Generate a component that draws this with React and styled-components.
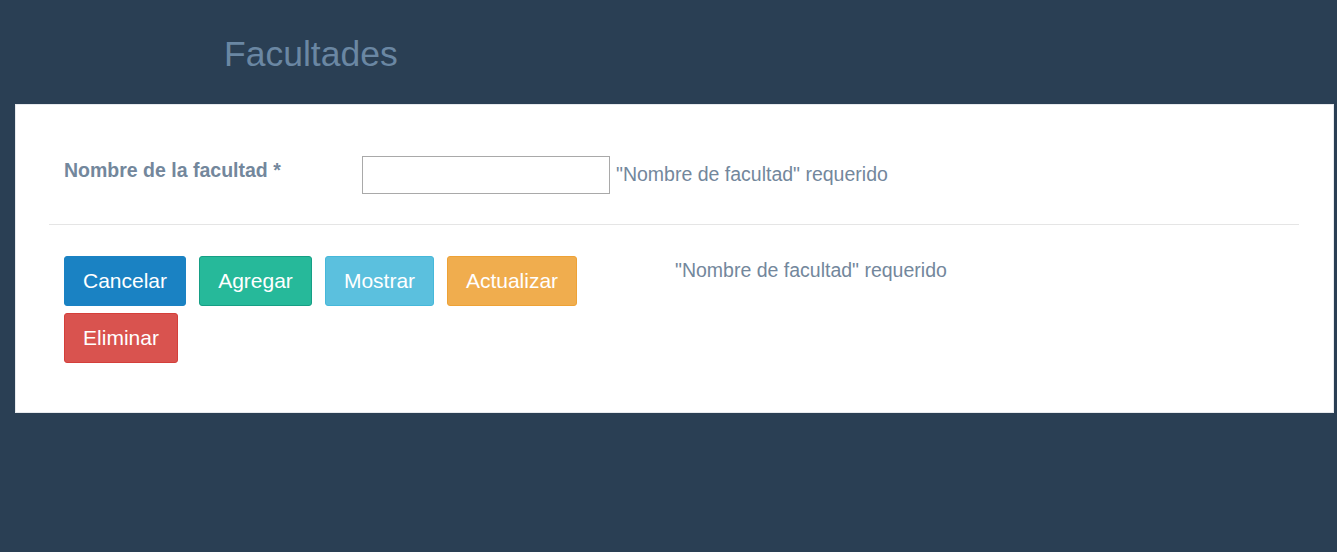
import React from "react";
import styled, { createGlobalStyle } from "styled-components";

const Global = createGlobalStyle`
  html, body { margin: 0; padding: 0; }
  body {
    background: #2A3F54;
    font-family: "Liberation Sans", Arial, sans-serif;
    color: #73879C;
  }
`;

const Page = styled.div`
  width: 1337px;
  height: 552px;
  background: #2A3F54;
  overflow: hidden;
`;

const Header = styled.header`
  height: 104px;
  box-sizing: border-box;
  padding: 33px 0 0 224px;
`;

const Title = styled.h3`
  margin: 0;
  font-weight: 400;
  font-size: 35.5px;
  line-height: 42px;
  color: #6A87A3;
`;

const Panel = styled.section`
  margin-left: 15px;
  width: 1319px;
  height: 309px;
  box-sizing: border-box;
  background: #fff;
  border: 1px solid #E6E9ED;
  padding: 51px 34px 0 33px;
`;

const FormRow = styled.div`
  display: flex;
  align-items: flex-start;
  padding-left: 15px;
`;

const Label = styled.label`
  width: 298px;
  flex: none;
  font-weight: 700;
  font-size: 19.5px;
  line-height: 28px;
  color: #73879C;
`;

const Input = styled.input`
  width: 248px;
  height: 38px;
  box-sizing: border-box;
  margin: 0;
  border: 1px solid #A9A9A9;
  padding: 0 8px;
  font: inherit;
  outline: none;
`;

const Help = styled.span`
  margin-left: 6px;
  font-size: 19.5px;
  line-height: 36px;
  color: #73879C;
`;

const Divider = styled.hr`
  border: 0;
  border-top: 1px solid #E5E5E5;
  margin: 30px 0 31px;
`;

const ActionsRow = styled.div`
  display: flex;
  align-items: flex-start;
  padding-left: 15px;
`;

const Buttons = styled.div`
  width: 596px;
  display: flex;
  flex-wrap: wrap;
  gap: 7px 13px;
`;

const palette = {
  primary: ["#1A82C3", "#1A82C3"],
  success: ["#26B99A", "#169F85"],
  info: ["#5BC0DE", "#46B8DA"],
  warning: ["#F0AD4E", "#EEA236"],
  danger: ["#D9534F", "#D43F3A"],
};

const Button = styled.button`
  height: 50px;
  box-sizing: border-box;
  padding: 0;
  border-radius: 3px;
  font-family: "Liberation Sans", Arial, sans-serif;
  font-size: 21px;
  color: #fff;
  background: ${(p) => palette[p.$variant][0]};
  border: 1px solid ${(p) => palette[p.$variant][1]};
  cursor: pointer;
`;

const SideText = styled.div`
  padding-left: 15px;
  font-size: 19.5px;
  line-height: 28px;
  color: #73879C;
`;

export default function App() {
  return (
    <Page>
      <Global />
      <Header>
        <Title>Facultades</Title>
      </Header>
      <Panel>
        <FormRow>
          <Label>Nombre de la facultad *</Label>
          <Input type="text" />
          <Help>"Nombre de facultad" requerido</Help>
        </FormRow>
        <Divider />
        <ActionsRow>
          <Buttons>
            <Button $variant="primary" style={{ width: 122 }}>Cancelar</Button>
            <Button $variant="success" style={{ width: 113 }}>Agregar</Button>
            <Button $variant="info" style={{ width: 109 }}>Mostrar</Button>
            <Button $variant="warning" style={{ width: 130 }}>Actualizar</Button>
            <Button $variant="danger" style={{ width: 114 }}>Eliminar</Button>
          </Buttons>
          <SideText>"Nombre de facultad" requerido</SideText>
        </ActionsRow>
      </Panel>
    </Page>
  );
}
